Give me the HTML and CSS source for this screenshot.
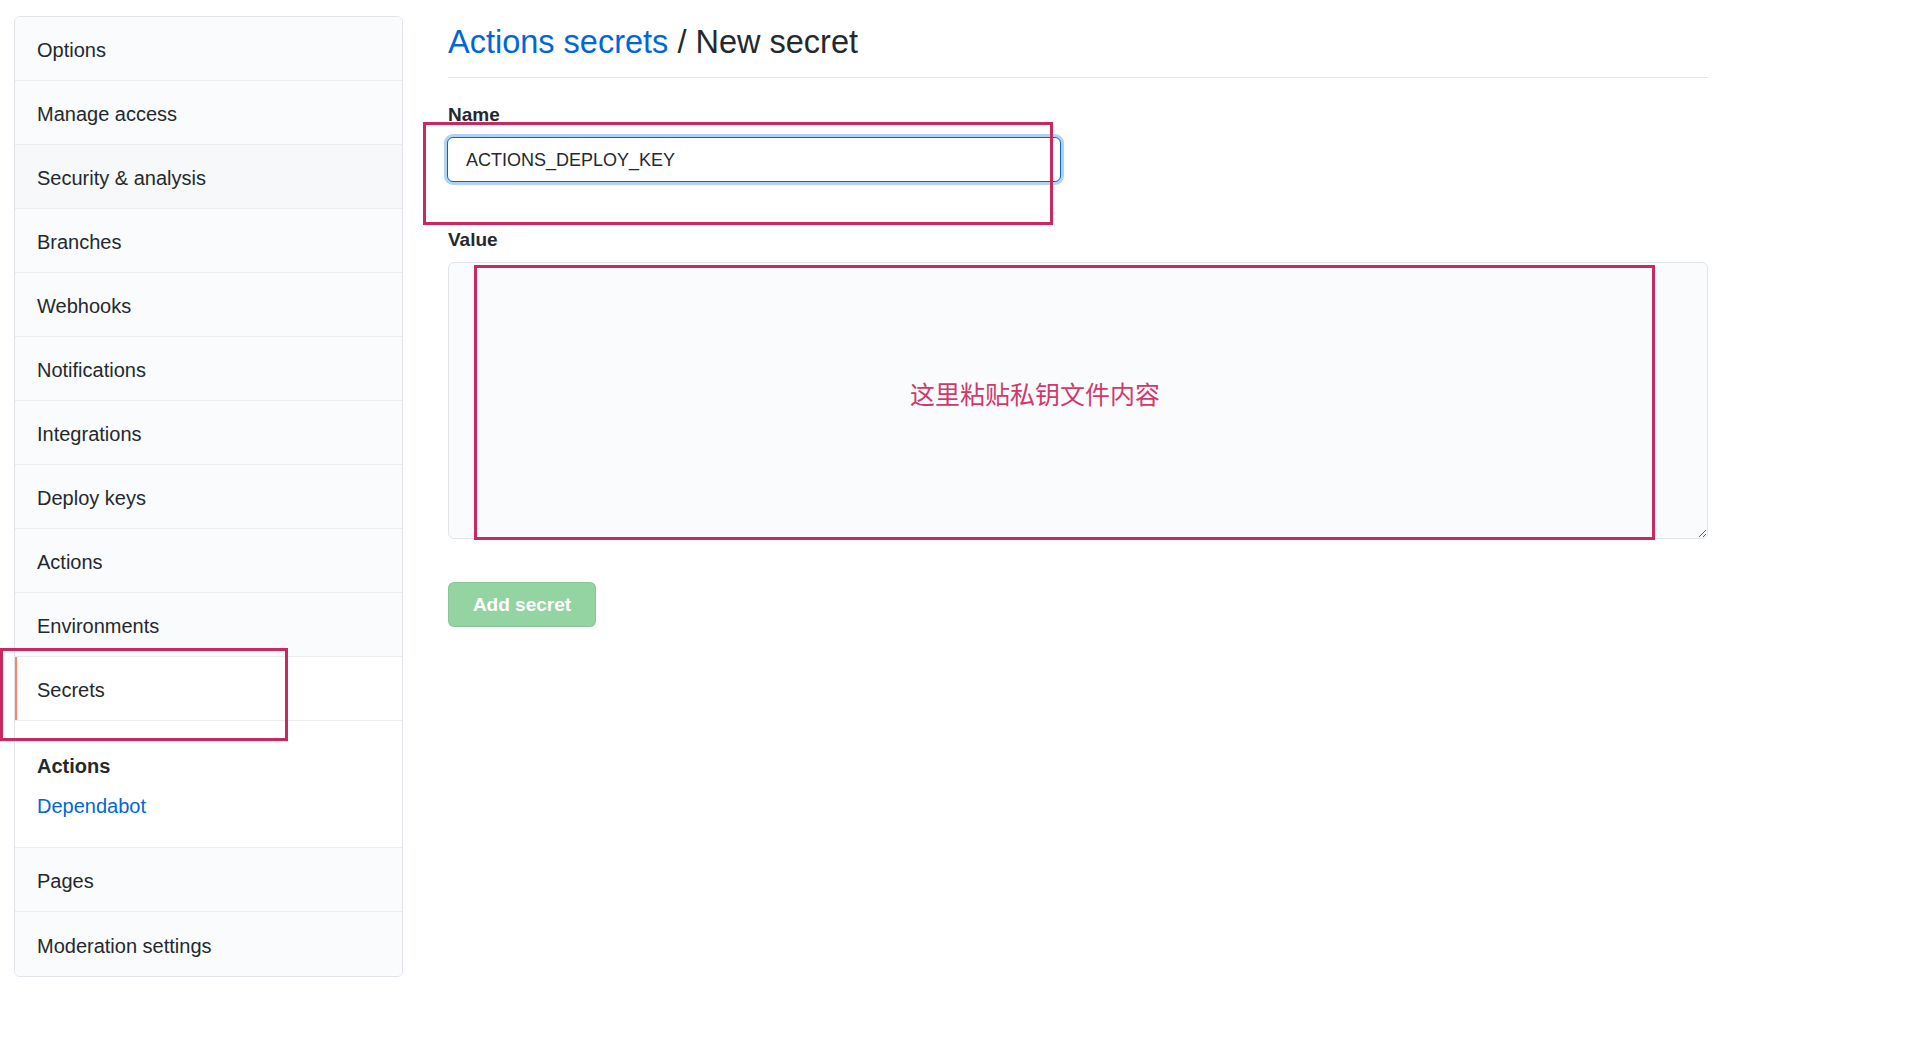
FILE: index.html
```html
<!DOCTYPE html>
<html lang="en">
<head>
<meta charset="utf-8">
<title>Actions secrets / New secret</title>
<link rel="stylesheet" href="styles.css">
</head>
<body>
<div class="page">
  <nav class="menu">
    <div class="menu-item">Options</div>
    <div class="menu-item">Manage access</div>
    <div class="menu-item hover">Security &amp; analysis</div>
    <div class="menu-item">Branches</div>
    <div class="menu-item">Webhooks</div>
    <div class="menu-item">Notifications</div>
    <div class="menu-item">Integrations</div>
    <div class="menu-item">Deploy keys</div>
    <div class="menu-item">Actions</div>
    <div class="menu-item">Environments</div>
    <div class="menu-item selected">Secrets</div>
    <div class="menu-section">
      <div class="section-title">Actions</div>
      <div class="section-link">Dependabot</div>
    </div>
    <div class="menu-item">Pages</div>
    <div class="menu-item last">Moderation settings</div>
  </nav>
  <main class="main">
    <h2 class="title"><span class="crumb">Actions secrets</span> / New secret</h2>
    <label class="label label-name">Name</label>
    <input class="name-input" type="text" value="ACTIONS_DEPLOY_KEY">
    <label class="label label-value">Value</label>
    <textarea class="value-input"></textarea>
    <button class="btn">Add secret</button>
  </main>
</div>
<div class="mark mark-side"></div>
<div class="mark mark-name"></div>
<div class="mark mark-value"><span class="note">这里粘贴私钥文件内容</span></div>
</body>
</html>
```
FILE: styles.css
```css
* { box-sizing: border-box; }
html, body { margin: 0; padding: 0; background: #fff; }
body {
  font-family: "Liberation Sans", Arial, sans-serif;
  color: #24292e;
  position: relative;
  min-height: 1057px;
}
.page {
  display: flex;
  align-items: flex-start;
  gap: 45px;
  padding: 16px 0 0 14px;
}
.menu {
  width: 389px;
  flex: none;
  border: 1px solid #e1e4e8;
  border-radius: 6px;
  overflow: hidden;
  background: #fff;
}
.menu-item {
  height: 64px;
  display: flex;
  align-items: center;
  padding: 4px 0 0 22px;
  font-size: 20px;
  background: #fafbfc;
  border-bottom: 1px solid #eaecef;
}
.menu-item.hover { background: #f6f8fa; }
.menu-item.selected {
  background: #fff;
  box-shadow: inset 2px 0 0 #f5866c;
}
.menu-item.last { border-bottom: 0; height: 64px; }
.menu-section {
  background: #fff;
  padding: 32px 22px 28px;
  border-bottom: 1px solid #eaecef;
}
.section-title {
  font-size: 20px;
  line-height: 26px;
  font-weight: 600;
}
.section-link {
  margin-top: 14px;
  font-size: 20px;
  line-height: 26px;
  color: #0366d6;
}
.main {
  width: 1260px;
  display: flex;
  flex-direction: column;
  align-items: flex-start;
  margin-top: -16px;
}
.title {
  align-self: stretch;
  margin: 16px 0 0;
  font-size: 32.5px;
  line-height: 52px;
  font-weight: 400;
  padding-bottom: 9px;
  border-bottom: 1px solid #e1e4e8;
}
.crumb { color: #0366d6; }
.label {
  font-size: 19px;
  font-weight: 700;
  line-height: 24px;
}
.label-name { margin-top: 25px; }
.label-value { margin-top: 46px; }
.name-input {
  margin-top: 10px;
  margin-left: -1px;
  width: 614px;
  height: 45px;
  border: 1px solid #0366d6;
  border-radius: 6px;
  box-shadow: 0 0 0 3px rgba(3, 102, 214, 0.3);
  padding: 2px 0 0 18px;
  font-family: "Liberation Sans", Arial, sans-serif;
  font-size: 18px;
  color: #24292e;
  background: #fff;
  outline: none;
}
.value-input {
  margin-top: 10px;
  width: 1260px;
  height: 277px;
  border: 1px solid #e1e4e8;
  border-radius: 6px;
  background: #fafbfc;
  resize: vertical;
  outline: none;
  display: block;
}
.btn {
  margin-top: 43px;
  width: 148px;
  height: 45px;
  border: 1px solid rgba(27, 31, 35, 0.08);
  border-radius: 6px;
  background: #94d3a2;
  color: #fff;
  font-family: "Liberation Sans", Arial, sans-serif;
  font-size: 19px;
  font-weight: 700;
  padding: 0;
}
.mark {
  position: absolute;
  border: 3px solid #c9295c;
}
.mark-side { left: 0; top: 648px; width: 288px; height: 93px; }
.mark-name { left: 423px; top: 122px; width: 630px; height: 103px; }
.mark-value { left: 474px; top: 265px; width: 1181px; height: 275px; }
.note {
  position: absolute;
  left: 433px;
  top: 108px;
  font-family: "Noto Sans CJK SC", sans-serif;
  font-size: 25px;
  line-height: 34px;
  color: #d03a6b;
  white-space: nowrap;
}
```
